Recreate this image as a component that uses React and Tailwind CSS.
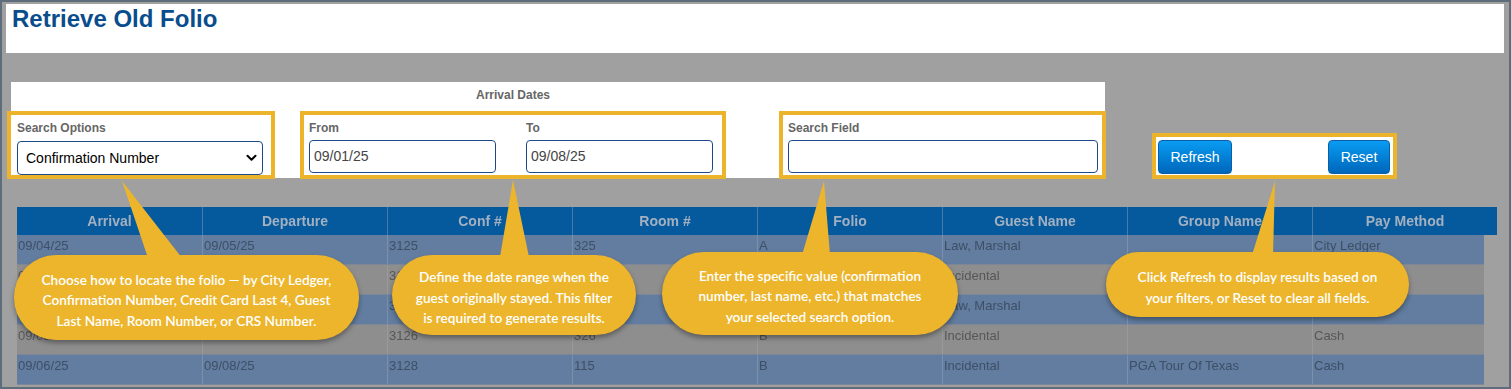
import React from "react";

const cols = ["Arrival", "Departure", "Conf #", "Room #", "Folio", "Guest Name", "Group Name", "Pay Method"];
const rows = [
  ["09/04/25", "09/05/25", "3125", "325", "A", "Law, Marshal", "", "City Ledger"],
  ["09/04/25", "09/05/25", "3125", "325", "B", "Incidental", "", "City Ledger"],
  ["09/05/25", "09/06/25", "3127", "326", "A", "Law, Marshal", "", "City Ledger"],
  ["09/05/25", "09/06/25", "3126", "326", "B", "Incidental", "", "Cash"],
  ["09/06/25", "09/08/25", "3128", "115", "B", "Incidental", "PGA Tour Of Texas", "Cash"],
];

function Label({ children }) {
  return <div className="text-[12px] leading-[14px] font-bold text-[#666666]">{children}</div>;
}

function TextBox({ value, width }) {
  return (
    <div
      className={`mt-[5px] h-[33px] ${width} rounded-[4px] border border-[#1d4b8a] bg-white pl-[4px] flex items-center text-[14px] text-[#444444]`}
    >
      {value}
    </div>
  );
}

function Callout({ className, children }) {
  return (
    <div
      className={`absolute flex items-center justify-center pt-[6px] rounded-[42px] bg-[#ecb52b] shadow-[0_3px_5px_rgba(0,0,0,0.35)] text-center text-white text-[13.6px] leading-[20.5px] font-semibold font-['Lato',sans-serif] ${className}`}
    >
      <div>{children}</div>
    </div>
  );
}

export default function App() {
  return (
    <div className="relative w-[1511px] h-[389px] overflow-hidden border-2 border-[#5e6d7b] bg-[#a0a0a0] font-['Liberation_Sans',Arial,sans-serif]">
      {/* Title bar */}
      <div className="ml-[4px] mt-[2px] w-[1498px] h-[49px] bg-white pl-[6px] pt-[1px]">
        <h1 className="text-[24px] leading-[28px] font-bold text-[#0a4d8c]">Retrieve Old Folio</h1>
      </div>

      {/* Filters */}
      <div className="mt-[29px] ml-[9px] flex items-start">
        <div className="w-[1094px] h-[96px] bg-white flex flex-col">
          <div className="h-[33px] flex">
            <div className="ml-[293px] w-[418px] pt-[6px] text-center">
              <Label>Arrival Dates</Label>
            </div>
          </div>
          <div className="flex h-[60px]">
            {/* Search options */}
            <div className="w-[260px] h-[60px] bg-white ring-4 ring-[#ecb42b] pl-[6px] pt-[6px]">
              <Label>Search Options</Label>
              <div className="mt-[6px] h-[34px] w-[246px] rounded-[4px] border border-[#1d4b8a] bg-white pl-[8px] pr-[5px] flex items-center justify-between text-[14px] text-black">
                <span>Confirmation Number</span>
                <svg width="11" height="8" viewBox="0 0 11 8">
                  <path d="M1.5 1.8 L5.5 5.8 L9.5 1.8" fill="none" stroke="#000" strokeWidth="2" strokeLinecap="round" strokeLinejoin="round" />
                </svg>
              </div>
            </div>
            {/* Dates */}
            <div className="ml-[33px] w-[418px] h-[60px] bg-white ring-4 ring-[#ecb42b] pl-[5px] pt-[6px] flex">
              <div className="w-[217px]">
                <Label>From</Label>
                <TextBox value="09/01/25" width="w-[187px]" />
              </div>
              <div className="w-[187px]">
                <Label>To</Label>
                <TextBox value="09/08/25" width="w-[187px]" />
              </div>
            </div>
            {/* Search field */}
            <div className="ml-[61px] w-[319px] h-[60px] bg-white ring-4 ring-[#ecb42b] pl-[5px] pt-[6px]">
              <Label>Search Field</Label>
              <TextBox value="" width="w-[310px]" />
            </div>
          </div>
        </div>

        {/* Buttons */}
        <div className="ml-[51px] mt-[55px] w-[237px] h-[38px] bg-white ring-4 ring-[#ecb42b] pl-[2px] pr-[3px] pt-[3px] flex justify-between items-start">
          <button className="w-[74px] h-[34px] rounded-[4px] border border-[#0b5fa8] bg-gradient-to-b from-[#0a9cf2] to-[#0067bb] text-white text-[14px]">
            Refresh
          </button>
          <button className="w-[62px] h-[34px] rounded-[4px] border border-[#0b5fa8] bg-gradient-to-b from-[#0a9cf2] to-[#0067bb] text-white text-[14px]">
            Reset
          </button>
        </div>
      </div>

      {/* Table */}
      <div className="mt-[29px] ml-[15px] blur-[0.7px]">
        <div className="flex w-[1480px] h-[28px] bg-[#045a9c]">
          {cols.map((c, i) => (
            <div
              key={c}
              className={`w-[185px] flex items-center justify-center text-[14px] font-bold text-[#a3b0c1] ${i > 0 ? "border-l border-[#4a7aa8]" : ""}`}
            >
              {c}
            </div>
          ))}
        </div>
        {rows.map((r, ri) => (
          <div
            key={ri}
            className={`flex w-[1467px] h-[30px] border-b border-[#7d8797] ${ri % 2 === 0 ? "bg-[#627da0] text-[#3e4f66]" : "bg-[#8e8e8e] text-[#575757]"}`}
          >
            {r.map((v, ci) => (
              <div
                key={ci}
                className={`${ci === 7 ? "w-[172px]" : "w-[185px]"} pl-[1px] pt-[3px] text-[13px] leading-[16px] ${ci > 0 ? (ri % 2 === 0 ? "border-l border-[#7b90ab]" : "border-l border-[#9a9a9a]") : ""}`}
              >
                {v}
              </div>
            ))}
          </div>
        ))}
      </div>

      {/* Callouts */}
      <Callout className="left-[12px] top-[253px] w-[345px] h-[85px]">
        Choose how to locate the folio — by City Ledger,
        <br />
        Confirmation Number, Credit Card Last 4, Guest
        <br />
        Last Name, Room Number, or CRS Number.
      </Callout>
      <Callout className="left-[390px] top-[253px] w-[244px] h-[80px]">
        Define the date range when the
        <br />
        guest originally stayed. This filter
        <br />
        is required to generate results.
      </Callout>
      <Callout className="left-[660px] top-[250px] w-[296px] h-[83px]">
        Enter the specific value (confirmation
        <br />
        number, last name, etc.) that matches
        <br />
        your selected search option.
      </Callout>
      <Callout className="left-[1104px] top-[250px] w-[303px] h-[65px]">
        Click Refresh to display results based on
        <br />
        your filters, or Reset to clear all fields.
      </Callout>

      <svg className="absolute left-0 top-0 pointer-events-none" width="1507" height="385" viewBox="0 0 1507 385">
        <polygon points="120,179 146,256 180,256" fill="#ecb52b" />
        <polygon points="511,178 498,255 527,255" fill="#ecb52b" />
        <polygon points="822,179 800,253 828,253" fill="#ecb52b" />
        <polygon points="1273,179 1250,253 1271,253" fill="#ecb52b" />
      </svg>
    </div>
  );
}
